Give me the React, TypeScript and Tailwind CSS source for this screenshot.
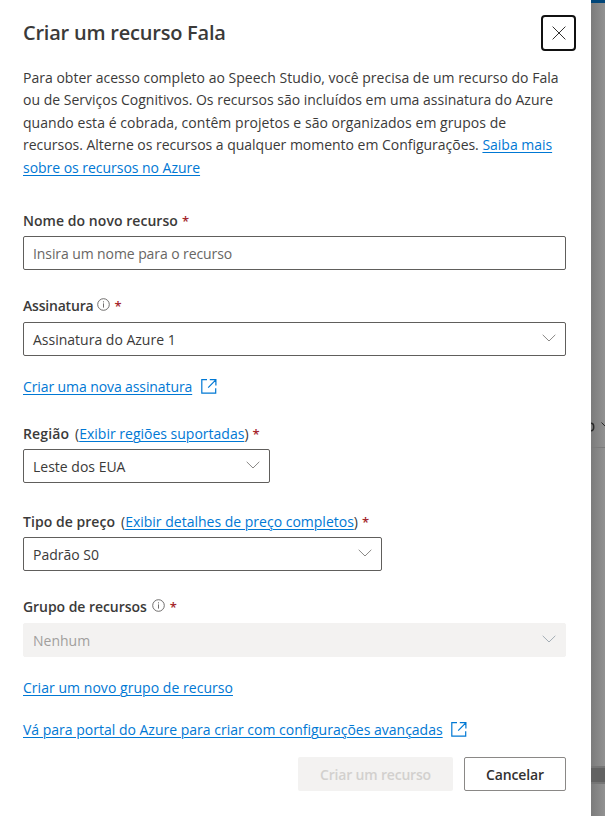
import React from "react";

function Chevron({ color = "#8a8886" }: { color?: string }) {
  return (
    <svg width="14" height="8" viewBox="0 0 14 8" fill="none" stroke={color} strokeWidth="1" className="mb-[3px] shrink-0">
      <path d="M0.7 0.8 L7 7 L13.3 0.8" />
    </svg>
  );
}

function Info() {
  return (
    <svg width="13" height="13" viewBox="0 0 13 13" fill="none" stroke="#605e5c" strokeWidth="0.9" className="mb-[4px] shrink-0">
      <circle cx="6.5" cy="6.5" r="5.8" />
      <path d="M6.5 5.4V9.6M6.5 3.3V4.4" />
    </svg>
  );
}

function External() {
  return (
    <svg width="16" height="15" viewBox="0 0 16 15" fill="none" stroke="#0078d4" strokeWidth="1.2" className="mb-px shrink-0">
      <path d="M6 0.7H0.8V14.2H14.7V9.2M8.8 0.7H14.9V6.6M14.8 0.8L7.2 8.6" />
    </svg>
  );
}

function Star() {
  return <span className="text-[13px] font-semibold text-[#a4262c]">*</span>;
}

const link = "text-[#0078d4] underline decoration-1 underline-offset-2";

function Select({ text, size, disabled }: { text: string; size: string; disabled?: boolean }) {
  return (
    <div
      className={
        "flex h-[34px] items-center justify-between rounded-[2px] pr-[9px] pl-[9px] " +
        size +
        (disabled ? " border border-[#f3f2f1] bg-[#f3f2f1] text-[#a19f9d]" : " border border-[#605e5c] text-[#3b3a39]")
      }
    >
      <span className="pt-[2px]">{text}</span>
      <Chevron color={disabled ? "#a3adb5" : undefined} />
    </div>
  );
}

export default function App() {
  return (
    <div className="flex h-[816px] w-[605px] overflow-hidden bg-white font-['Open_Sans','Noto_Sans',sans-serif] text-[14px] leading-[22px] whitespace-nowrap text-[#3b3a39]">
      <main className="h-full w-[591px] shrink-0 rounded-tr-[2px] bg-white pr-[25px] pl-[23px]">
        <header className="flex h-[67px] justify-between pt-[15px]">
          <h1 className="pt-[3px] text-[20px] leading-[30px] font-semibold tracking-[-0.22px]">Criar um recurso Fala</h1>
          <button className="mr-[-10px] flex h-[36px] w-[35px] items-center justify-center rounded-[4px] border-2 border-[#111]">
            <svg width="14" height="14" viewBox="0 0 14 14" stroke="#323130" strokeWidth="1">
              <path d="M0.6 0.6L13.4 13.4M13.4 0.6L0.6 13.4" />
            </svg>
          </button>
        </header>

        <div className="h-[143px] leading-[22.4px]">
          <p className="tracking-[0.01px]">Para obter acesso completo ao Speech Studio, você precisa de um recurso do Fala</p>
          <p className="tracking-[0.005px]">ou de Serviços Cognitivos. Os recursos são incluídos em uma assinatura do Azure</p>
          <p className="tracking-[0.05px]">quando esta é cobrada, contêm projetos e são organizados em grupos de</p>
          <p className="tracking-[-0.02px]">
            recursos. Alterne os recursos a qualquer momento em Configurações. <a className={link}>Saiba mais</a>
          </p>
          <p className="tracking-[-0.03px]"><a className={link}>sobre os recursos no Azure</a></p>
        </div>

        <div className="flex h-[26px] gap-[4px]"><span className="font-semibold tracking-[0.05px]">Nome do novo recurso</span> <Star /></div>
        <div className="flex h-[34px] items-center rounded-[2px] border border-[#605e5c] px-[9px] text-[#686664]">
          <span className="pt-[2px] tracking-[-0.09px]">Insira um nome para o recurso</span>
        </div>

        <div className="mt-[25px] flex h-[27px] items-start gap-[4px]">
          <span className="font-semibold tracking-[-0.2px]">Assinatura</span>
          <span className="flex h-[22px] items-center"><Info /></span>
          <Star />
        </div>
        <Select text="Assinatura do Azure 1" size="w-full" />

        <div className="mt-[20px] flex h-[22px] items-center gap-[9px]">
          <a className={link + " tracking-[-0.1px]"}>Criar uma nova assinatura</a>
          <External />
        </div>

        <div className="mt-[25px] flex h-[26px] gap-[4px]">
          <span className="mr-[2px] font-semibold tracking-[0.12px]">Região</span>
          <span>(<a className={link}>Exibir regiões suportadas</a>)</span>
          <Star />
        </div>
        <Select text="Leste dos EUA" size="w-[247px]" />

        <div className="mt-[28px] flex h-[26px] gap-[4px]">
          <span className="mr-[2px] font-semibold tracking-[0.04px]">Tipo de preço</span>
          <span>(<a className={link}>Exibir detalhes de preço completos</a>)</span>
          <Star />
        </div>
        <Select text="Padrão S0" size="w-[359px]" />

        <div className="mt-[25px] flex h-[27px] items-start gap-[5px]">
          <span className="font-semibold tracking-[-0.05px]">Grupo de recursos</span>
          <span className="flex h-[22px] items-center"><Info /></span>
          <Star />
        </div>
        <Select text="Nenhum" size="w-full" disabled />

        <div className="mt-[20px] h-[22px]"><a className={link + " tracking-[0.04px]"}>Criar um novo grupo de recurso</a></div>
        <div className="mt-[20px] flex h-[22px] items-center gap-[8px]">
          <a className={link}>Vá para portal do Azure para criar com configurações avançadas</a>
          <External />
        </div>

        <footer className="mt-[16px] flex justify-end gap-[11px] font-semibold">
          <button className="h-[34px] w-[155px] rounded-[2px] bg-[#f3f2f1] pt-px tracking-[-0.18px] text-[#d2d0ce]">Criar um recurso</button>
          <button className="h-[34px] w-[102px] rounded-[2px] border border-[#8a8886] pt-px tracking-[-0.15px] text-[#323130]">Cancelar</button>
        </footer>
      </main>

      <aside className="flex w-[14px] flex-col bg-linear-to-r from-[#7b7b7b] to-[#929292]">
        <div className="h-[3px] bg-[#004578]" />
        <div className="flex h-[445px] items-end overflow-hidden border-b border-[#7b7b7b] pb-[14px]">
          <svg width="14" height="12" viewBox="0 0 14 12" fill="none" stroke="#292929">
            <ellipse cx="0.1" cy="6" rx="2.6" ry="3.7" strokeWidth="1.5" />
            <path d="M10.5 1.5L16 7" />
          </svg>
        </div>
        <div className="mt-[318px] h-[18px] border-y-2 border-[#757575] bg-[#626262]" />
      </aside>
    </div>
  );
}
